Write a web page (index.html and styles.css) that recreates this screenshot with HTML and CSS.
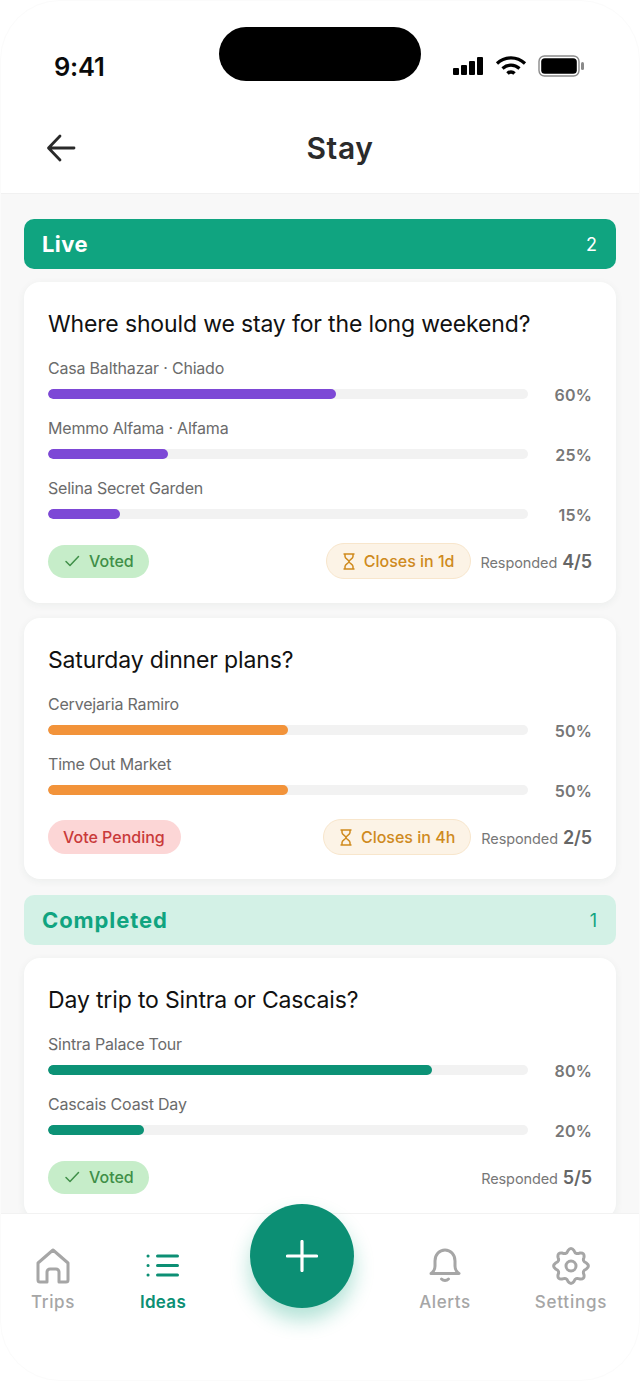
FILE: index.html
```html
<!DOCTYPE html>
<html lang="en">
<head>
<meta charset="utf-8">
<title>Stay</title>
<link rel="stylesheet" href="styles.css">
</head>
<body>
<div class="app">
  <div class="status">
    <span class="time">9:41</span>
    <div class="island"></div>
    <div class="status-icons">
      <svg width="32" height="20" viewBox="0 0 32 20"><rect x="1" y="12" width="6" height="7" rx="1"/><rect x="9" y="9" width="6" height="10" rx="1"/><rect x="17" y="5" width="6" height="14" rx="1"/><rect x="25" y="1" width="6" height="18" rx="1"/></svg>
      <svg width="32" height="22" viewBox="0 0 32 22" fill="none" stroke="#000" stroke-width="3.2"><path d="M2 8.500C10 1 22 1 30 8.500"/><path d="M7.500 13.500C12.500 9 19.500 9 24.500 13.500"/><path d="M12.500 18.500C14.500 16.600 17.500 16.600 19.500 18.500" stroke-width="3.600"/></svg>
      <svg width="47" height="22" viewBox="0 0 47 22"><rect x="1" y="1" width="40" height="20" rx="5.500" fill="none" stroke="#8a8a8a" stroke-width="1.400"/><rect x="3.200" y="3.200" width="35.600" height="15.600" rx="3.600" fill="#000"/><rect x="43" y="7" width="3" height="8" rx="1.500" fill="#8a8a8a"/></svg>
    </div>
  </div>
  <header class="topbar">
    <svg class="back" width="32" height="32" viewBox="0 0 32 32" fill="none" stroke="#2a2a2a" stroke-width="2.800" stroke-linecap="round" stroke-linejoin="round"><path d="M29 16H4M15 4 3.500 16 15 28"/></svg>
    <h1 class="title">Stay</h1>
  </header>
  <main class="content">
    <div class="section live"><span class="section-name">Live</span><span class="section-count">2</span></div>
    <article class="card">
      <h2 class="question">Where should we stay for the long weekend?</h2>
      <div class="options">
        <div class="option"><div class="option-name">Casa Balthazar · Chiado</div><div class="bar-row"><div class="track"><div class="fill purple" style="width:60%"></div></div><span class="pct">60%</span></div></div>
        <div class="option"><div class="option-name">Memmo Alfama · Alfama</div><div class="bar-row"><div class="track"><div class="fill purple" style="width:25%"></div></div><span class="pct">25%</span></div></div>
        <div class="option"><div class="option-name">Selina Secret Garden</div><div class="bar-row"><div class="track"><div class="fill purple" style="width:15%"></div></div><span class="pct">15%</span></div></div>
      </div>
      <div class="card-foot">
        <span class="pill voted"><svg width="16" height="12" viewBox="0 0 16 12" fill="none" stroke="#3f8f48" stroke-width="1.500" stroke-linecap="round" stroke-linejoin="round"><path d="M2 6.500 6 10.500 14.500 1.500"/></svg>Voted</span>
        <span class="spacer"></span>
        <span class="pill closes"><svg width="12" height="17" viewBox="0 0 12 17" fill="none" stroke="#cf8a1d" stroke-width="1.500"><path d="M.5 1h11M.5 16h11M2 1v2.500c0 2.500 4 3 4 5s-4 2.500-4 5V16M10 1v2.500c0 2.500-4 3-4 5s4 2.500 4 5V16"/></svg>Closes in 1d</span>
        <span class="responded">Responded <b>4/5</b></span>
      </div>
    </article>
    <article class="card">
      <h2 class="question">Saturday dinner plans?</h2>
      <div class="options">
        <div class="option"><div class="option-name">Cervejaria Ramiro</div><div class="bar-row"><div class="track"><div class="fill orange" style="width:50%"></div></div><span class="pct">50%</span></div></div>
        <div class="option"><div class="option-name">Time Out Market</div><div class="bar-row"><div class="track"><div class="fill orange" style="width:50%"></div></div><span class="pct">50%</span></div></div>
      </div>
      <div class="card-foot">
        <span class="pill pending">Vote Pending</span>
        <span class="spacer"></span>
        <span class="pill closes"><svg width="12" height="17" viewBox="0 0 12 17" fill="none" stroke="#cf8a1d" stroke-width="1.500"><path d="M.5 1h11M.5 16h11M2 1v2.500c0 2.500 4 3 4 5s-4 2.500-4 5V16M10 1v2.500c0 2.500-4 3-4 5s4 2.500 4 5V16"/></svg>Closes in 4h</span>
        <span class="responded">Responded <b>2/5</b></span>
      </div>
    </article>
    <div class="section done"><span class="section-name">Completed</span><span class="section-count">1</span></div>
    <article class="card">
      <h2 class="question">Day trip to Sintra or Cascais?</h2>
      <div class="options">
        <div class="option"><div class="option-name">Sintra Palace Tour</div><div class="bar-row"><div class="track"><div class="fill teal" style="width:80%"></div></div><span class="pct">80%</span></div></div>
        <div class="option"><div class="option-name">Cascais Coast Day</div><div class="bar-row"><div class="track"><div class="fill teal" style="width:20%"></div></div><span class="pct">20%</span></div></div>
      </div>
      <div class="card-foot">
        <span class="pill voted"><svg width="16" height="12" viewBox="0 0 16 12" fill="none" stroke="#3f8f48" stroke-width="1.500" stroke-linecap="round" stroke-linejoin="round"><path d="M2 6.500 6 10.500 14.500 1.500"/></svg>Voted</span>
        <span class="spacer"></span>
        <span class="responded">Responded <b>5/5</b></span>
      </div>
    </article>
  </main>
  <nav class="tabbar">
    <div class="tab tab-trips">
      <svg width="34" height="36" viewBox="0 0 34 36" fill="none" stroke="#a6a6a6" stroke-width="3" stroke-linejoin="round"><path d="M2 15 17 2l15 13v17a2 2 0 0 1-2 2h-7V24a3 3 0 0 0-3-3h-6a3 3 0 0 0-3 3v10H4a2 2 0 0 1-2-2z"/></svg>
      <span>Trips</span>
    </div>
    <div class="tab tab-ideas active">
      <svg width="34" height="24" viewBox="0 0 34 24" fill="none" stroke="#0c8f74" stroke-width="3" stroke-linecap="round"><path d="M11.500 2H31.500M11.500 11.500H31.500M11.500 21H31.500"/><path d="M2 2h.1M2 11.500h.1M2 21h.1"/></svg>
      <span>Ideas</span>
    </div>
    <div class="tab tab-alerts">
      <svg width="32" height="36" viewBox="0 0 32 36" fill="none" stroke="#a6a6a6" stroke-width="3" stroke-linecap="round" stroke-linejoin="round"><path d="M2 25.500c3-2 4-4 4-7.500v-5C6 6.500 10.500 2 16 2s10 4.500 10 11v5c0 3.500 1 5.500 4 7.500z"/><path d="M12.500 31c2 2 5 2 7 0"/></svg>
      <span>Alerts</span>
    </div>
    <div class="tab tab-settings">
      <svg width="38" height="38" viewBox="0 0 38 38" fill="none" stroke="#a6a6a6" stroke-width="3" stroke-linejoin="round"><circle cx="19" cy="19" r="5"/><path d="M15.960 3.700Q19 -.5 22.040 3.700Q23.590 7.910 27.670 6.030Q32.790 5.210 31.970 10.330Q30.090 14.410 34.300 15.960Q38.500 19 34.300 22.040Q30.090 23.590 31.970 27.670Q32.790 32.790 27.670 31.970Q23.590 30.090 22.040 34.300Q19 38.500 15.960 34.300Q14.410 30.090 10.330 31.970Q5.210 32.790 6.030 27.670Q7.910 23.590 3.700 22.040Q-.5 19 3.700 15.960Q7.910 14.410 6.030 10.330Q5.210 5.210 10.330 6.030Q14.410 7.910 15.960 3.700Z"/></svg>
      <span>Settings</span>
    </div>
    <button class="fab" aria-label="Add"><svg width="32" height="32" viewBox="0 0 32 32" fill="none" stroke="#fff" stroke-width="3.200" stroke-linecap="round"><path d="M16 1.500v29M1.500 16h29"/></svg></button>
  </nav>
  <div class="frame"></div>
</div>
</body>
</html>
```

FILE: styles.css
```css
* { box-sizing: border-box; }
html, body { margin: 0; padding: 0; }
body { width: 640px; height: 1381px; overflow: hidden; background: #fff; font-family: "Inter", "Liberation Sans", sans-serif; }
.app { position: relative; width: 640px; height: 1381px; display: flex; flex-direction: column; overflow: hidden; background: #fff; }
.status { height: 101px; flex: none; position: relative; display: flex; align-items: flex-start; justify-content: space-between; padding: 50px 55px 0 54px; }
.time { font-size: 25.5px; font-weight: 600; line-height: 34px; color: #0a0a0a; letter-spacing: -.2px; }
.island { position: absolute; left: 219px; top: 27px; width: 202px; height: 54px; border-radius: 27px; background: #000; }
.status-icons { display: flex; align-items: center; gap: 11px; padding-top: 5px; }
.topbar { height: 93px; flex: none; position: relative; display: flex; align-items: center; justify-content: center; border-bottom: 1px solid #f1f1f1; padding: 2px 0 0 40px; }
.back { position: absolute; left: 45px; top: 31px; }
.title { margin: 0; font-family: "Inter", sans-serif; font-size: 30px; font-weight: 600; color: #2b2b2b; letter-spacing: .6px; line-height: 38px; }
.content { flex: 1; min-height: 0; overflow: hidden; background: #f8f8f8; padding: 25px 24px 0; display: flex; flex-direction: column; }
.section { flex: none; height: 50px; border-radius: 10px; display: flex; align-items: center; justify-content: space-between; padding: 0 19px 0 18px; }
.live { background: #10a480; color: #fff; }
.done { background: #d3f1e6; color: #10a480; margin-top: 16px; }
.section-name { font-size: 22px; font-weight: 700; letter-spacing: .4px; }
.done .section-name { letter-spacing: .9px; }
.section-count { font-size: 18px; font-weight: 400; }
.card { flex: none; background: #fff; border-radius: 16px; margin-top: 13px; padding: 25px 24px 24px; box-shadow: 0 2px 8px rgba(40,60,50,.06); }
.card + .card { margin-top: 15px; }
.question { margin: 0; font-size: 23px; font-weight: 400; line-height: 34px; letter-spacing: -.15px; color: #111; }
.options { margin-top: 15px; display: flex; flex-direction: column; gap: 10px; }
.option { height: 50px; }
.option-name { font-size: 16px; line-height: 24px; letter-spacing: -.2px; color: #6b6b6b; }
.bar-row { display: flex; align-items: center; justify-content: space-between; height: 26px; margin-top: 1px; }
.track { width: 480px; height: 10px; border-radius: 5px; background: #f2f2f2; overflow: hidden; }
.fill { height: 100%; border-radius: 5px; }
.purple { background: #7d48d6; }
.orange { background: #f2933a; }
.teal { background: #0c9276; }
.pct { font-size: 16px; font-weight: 600; letter-spacing: .2px; color: #777; padding-top: 2px; }
.card-foot { display: flex; align-items: center; margin-top: 17px; height: 36px; }
.spacer { flex: 1; }
.pill { display: inline-flex; align-items: center; border-radius: 17px; font-size: 16px; font-weight: 500; line-height: 24px; }
.voted { background: #c6edc9; color: #3f8f48; height: 33px; padding: 0 15px 0 16px; gap: 9px; }
.pending { background: #fcd6d6; color: #c93a3a; height: 34px; padding: 0 16px 0 15px; }
.closes { background: #fcf3e6; color: #cf8a1d; height: 36px; border-radius: 18px; border: 1px solid #f8e6cc; padding: 0 15px 0 16px; gap: 9px; }
.responded { margin-left: 10px; font-size: 14.5px; letter-spacing: -.1px; color: #777; line-height: 24px; padding-top: 2px; }
.responded b { font-size: 18px; font-weight: 600; color: #666; margin-left: 1px; }
.tabbar { position: relative; flex: none; height: 168px; background: #fff; border-top: 1px solid #f2f2f2; }
.tab { position: absolute; top: 33px; display: flex; flex-direction: column; align-items: center; width: 100px; font-size: 17px; font-weight: 500; color: #a6a6a6; letter-spacing: .6px; }
.tab svg { height: 38px; flex: none; }
.tab span { line-height: 22px; margin-top: 6px; }
.tab-trips { left: 3px; }
.tab-ideas { left: 113px; letter-spacing: .3px; }
.tab-alerts { left: 395px; }
.tab-settings { left: 521px; letter-spacing: .8px; }
.active { color: #0c8f74; font-weight: 600; }
.fab { position: absolute; left: 250px; top: -10px; width: 104px; height: 104px; padding: 0; border: 0; border-radius: 50%; background: #0c8f74; display: flex; align-items: center; justify-content: center; box-shadow: 0 12px 20px rgba(16,164,128,.32); }
.frame { position: absolute; inset: 0; border: 1px solid #fbfbfb; border-radius: 60px; pointer-events: none; }
```
